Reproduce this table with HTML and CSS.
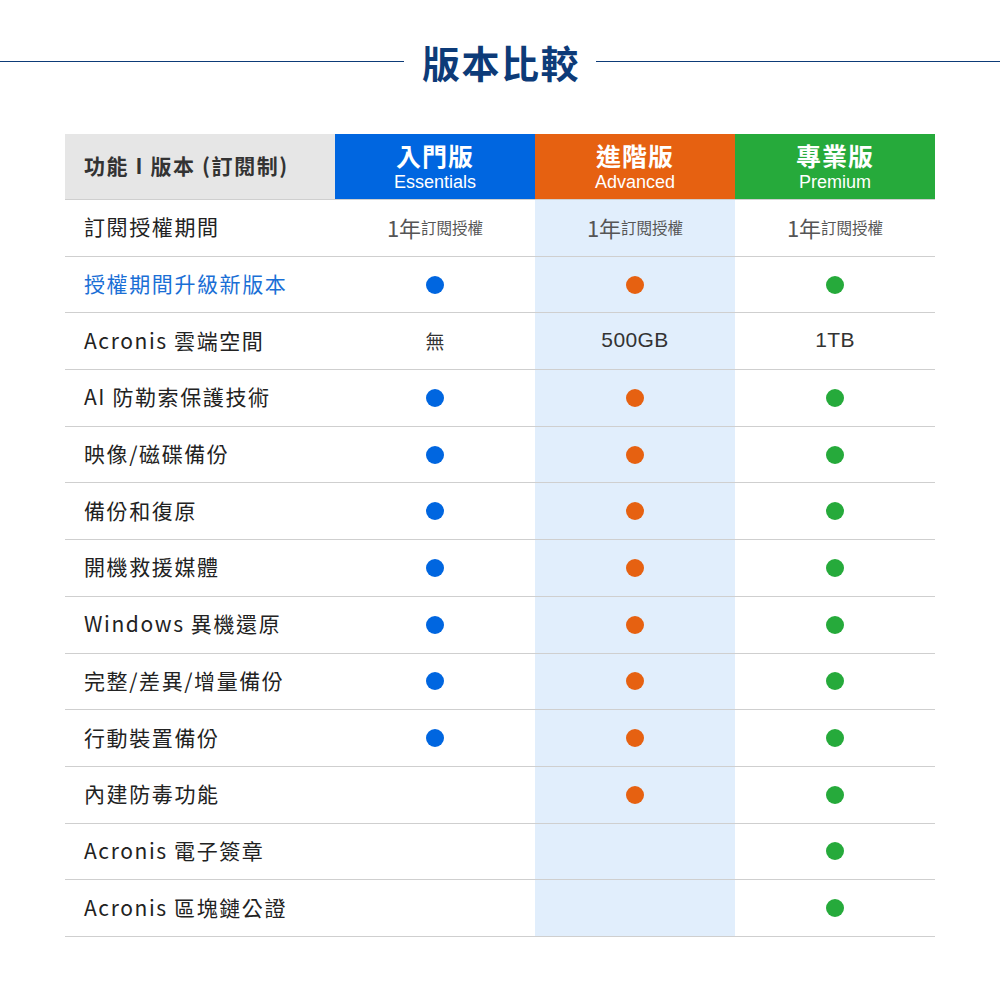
FILE: index.html
```html
<!DOCTYPE html>
<html lang="zh-Hant">
<head>
<meta charset="utf-8">
<link rel="stylesheet" href="styles.css">
</head>
<body>
<div class="page">
  <div class="title-row">
    <span class="rule"></span>
    <h1 class="title">版本比較</h1>
    <span class="rule"></span>
  </div>
  <div class="table">
    <div class="row head">
      <div class="cell feat head-feat">功能 I 版本 (訂閱制)</div>
      <div class="cell plan blue"><span class="pname">入門版</span><span class="pen">Essentials</span></div>
      <div class="cell plan orange"><span class="pname">進階版</span><span class="pen">Advanced</span></div>
      <div class="cell plan green"><span class="pname">專業版</span><span class="pen">Premium</span></div>
    </div>
    <div class="row">
      <div class="cell feat">訂閱授權期間</div>
      <div class="cell val"><span class="big">1年</span><span class="small">訂閱授權</span></div>
      <div class="cell val mid"><span class="big">1年</span><span class="small">訂閱授權</span></div>
      <div class="cell val"><span class="big">1年</span><span class="small">訂閱授權</span></div>
    </div>
    <div class="row">
      <div class="cell feat link">授權期間升級新版本</div>
      <div class="cell val"><i class="dot d-blue"></i></div>
      <div class="cell val mid"><i class="dot d-orange"></i></div>
      <div class="cell val"><i class="dot d-green"></i></div>
    </div>
    <div class="row">
      <div class="cell feat">Acronis 雲端空間</div>
      <div class="cell val"><span class="none">無</span></div>
      <div class="cell val mid"><span class="txt">500GB</span></div>
      <div class="cell val"><span class="txt">1TB</span></div>
    </div>
    <div class="row">
      <div class="cell feat">AI 防勒索保護技術</div>
      <div class="cell val"><i class="dot d-blue"></i></div>
      <div class="cell val mid"><i class="dot d-orange"></i></div>
      <div class="cell val"><i class="dot d-green"></i></div>
    </div>
    <div class="row">
      <div class="cell feat">映像/磁碟備份</div>
      <div class="cell val"><i class="dot d-blue"></i></div>
      <div class="cell val mid"><i class="dot d-orange"></i></div>
      <div class="cell val"><i class="dot d-green"></i></div>
    </div>
    <div class="row">
      <div class="cell feat">備份和復原</div>
      <div class="cell val"><i class="dot d-blue"></i></div>
      <div class="cell val mid"><i class="dot d-orange"></i></div>
      <div class="cell val"><i class="dot d-green"></i></div>
    </div>
    <div class="row">
      <div class="cell feat">開機救援媒體</div>
      <div class="cell val"><i class="dot d-blue"></i></div>
      <div class="cell val mid"><i class="dot d-orange"></i></div>
      <div class="cell val"><i class="dot d-green"></i></div>
    </div>
    <div class="row">
      <div class="cell feat">Windows 異機還原</div>
      <div class="cell val"><i class="dot d-blue"></i></div>
      <div class="cell val mid"><i class="dot d-orange"></i></div>
      <div class="cell val"><i class="dot d-green"></i></div>
    </div>
    <div class="row">
      <div class="cell feat">完整/差異/增量備份</div>
      <div class="cell val"><i class="dot d-blue"></i></div>
      <div class="cell val mid"><i class="dot d-orange"></i></div>
      <div class="cell val"><i class="dot d-green"></i></div>
    </div>
    <div class="row">
      <div class="cell feat">行動裝置備份</div>
      <div class="cell val"><i class="dot d-blue"></i></div>
      <div class="cell val mid"><i class="dot d-orange"></i></div>
      <div class="cell val"><i class="dot d-green"></i></div>
    </div>
    <div class="row">
      <div class="cell feat">內建防毒功能</div>
      <div class="cell val"></div>
      <div class="cell val mid"><i class="dot d-orange"></i></div>
      <div class="cell val"><i class="dot d-green"></i></div>
    </div>
    <div class="row">
      <div class="cell feat">Acronis 電子簽章</div>
      <div class="cell val"></div>
      <div class="cell val mid"></div>
      <div class="cell val"><i class="dot d-green"></i></div>
    </div>
    <div class="row">
      <div class="cell feat">Acronis 區塊鏈公證</div>
      <div class="cell val"></div>
      <div class="cell val mid"></div>
      <div class="cell val"><i class="dot d-green"></i></div>
    </div>
  </div>
</div>
</body>
</html>
```
FILE: styles.css
```css
* { box-sizing: border-box; }
html, body { margin: 0; padding: 0; background: #fff; }
body {
  font-family: "Noto Sans CJK TC", "Noto Sans", sans-serif;
  color: #222;
}
.page { width: 1000px; height: 1000px; }
.title-row {
  display: flex;
  align-items: center;
  padding-top: 35px;
  height: 88px;
}
.rule { flex: 1; height: 1px; background: #0d3b78; }
.title {
  margin: 0 16px 0 18px;
  font-size: 38px;
  line-height: 52px;
  font-weight: 700;
  color: #0d3b78;
  letter-spacing: 1.5px;
}
.table {
  margin: 46px 65px 0;
  width: 870px;
}
.row {
  display: grid;
  grid-template-columns: 270px 200px 200px 200px;
  height: 56.7px;
  border-bottom: 1px solid #cfcfcf;
}
.row.head { height: 66px; border-bottom: 1px solid #cfcfcf; }
.cell { display: flex; align-items: center; }
.feat {
  padding-left: 19px;
  padding-bottom: 3px;
  font-size: 21px;
  letter-spacing: 1.6px;
  color: #222;
}
.feat.link { color: #1a6fd6; }
.head-feat {
  background: #e6e6e6;
  font-weight: 700;
  font-size: 21px;
  letter-spacing: 1.6px;
  color: #333;
  padding-bottom: 3px;
}
.plan {
  flex-direction: column;
  justify-content: center;
  color: #fff;
  padding-bottom: 2px;
}
.plan.blue { background: #0066e0; }
.plan.orange { background: #e66111; }
.plan.green { background: #26aa3b; }
.pname { font-size: 25px; font-weight: 700; line-height: 32px; letter-spacing: 1px; }
.pen { font-family: "Liberation Sans", Arial, sans-serif; font-size: 18px; line-height: 22px; }
.val { justify-content: center; color: #555; padding-bottom: 2px; }
.val.mid { background: #e1eefc; }
.big { font-size: 22px; }
.small { font-size: 15.5px; }
.txt { font-family: "Liberation Sans", Arial, sans-serif; font-size: 21px; letter-spacing: 0.4px; color: #333; }
.none { font-size: 19px; color: #333; }
.dot { display: block; width: 18px; height: 18px; margin-top: 2px; border-radius: 50%; }
.d-blue { background: #0066e0; }
.d-orange { background: #e66111; }
.d-green { background: #26aa3b; }
```
